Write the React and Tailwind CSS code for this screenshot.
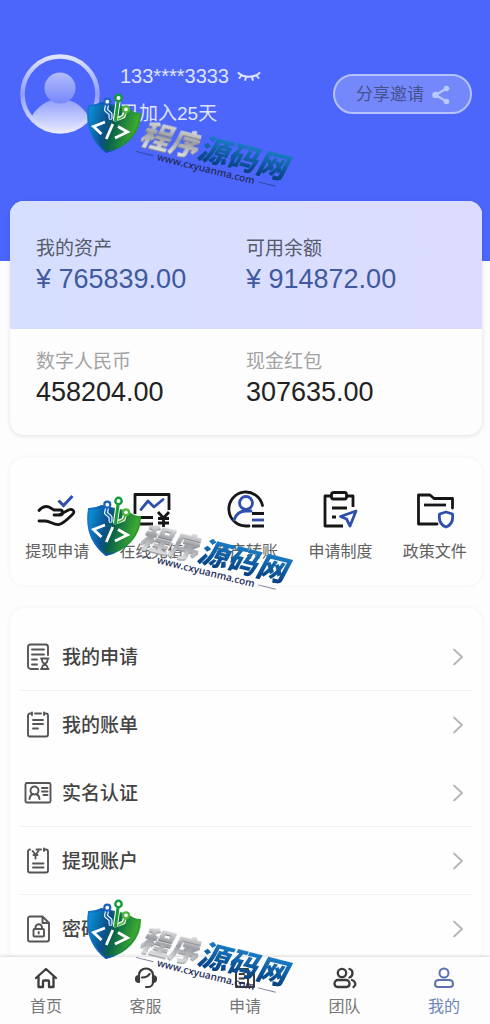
import React from "react";

const wallet = [
  { label: "数字人民币", value: "458204.00" },
  { label: "现金红包", value: "307635.00" },
];

const assets = [
  { label: "我的资产", value: "¥ 765839.00" },
  { label: "可用余额", value: "¥ 914872.00" },
];

const services = [
  { label: "提现申请", Icon: WithdrawIcon },
  { label: "在线充值", Icon: RechargeIcon },
  { label: "资产转账", Icon: TransferIcon },
  { label: "申请制度", Icon: RulesIcon },
  { label: "政策文件", Icon: PolicyIcon },
];

const menu = [
  { label: "我的申请", Icon: ApplyIcon, line: "border-[#f1f1f1]" },
  { label: "我的账单", Icon: BillIcon, line: "border-transparent" },
  { label: "实名认证", Icon: IdCardIcon, line: "border-[#f1f1f1]" },
  { label: "提现账户", Icon: AccountIcon, line: "border-[#f1f1f1]" },
  { label: "密码", Icon: LockFileIcon, line: "border-transparent" },
];

const tabs = [
  { label: "首页", Icon: HomeIcon },
  { label: "客服", Icon: HeadsetIcon },
  { label: "申请", Icon: BookIcon },
  { label: "团队", Icon: TeamIcon },
  { label: "我的", Icon: PersonIcon, active: true },
];

function Stroke({ className, box, width = 2, children }) {
  return (
    <svg
      aria-hidden="true"
      viewBox={box}
      className={className}
      fill="none"
      stroke="currentColor"
      strokeWidth={width}
      strokeLinecap="round"
      strokeLinejoin="round"
    >
      {children}
    </svg>
  );
}

/* Service icons */
function WithdrawIcon() {
  return (
    <Stroke box="0 0 40 40" width={2.8} className="size-10 text-[#161616]">
      <path d="M2 20.5c3-3.500 7-4.600 10-3.500l5 3h6c3.500 0 3.500 5 0 5h-6" />
      <path d="M23 24.500l8.500-4.500c3.500-1.800 7 1.200 4.500 3.800-4 4-9.500 9.700-14 10.700-5 .8-9-3.500-13.500-3.500H2" />
      <path d="M21.500 10.500l5 5 9-9.500" stroke="#2f4fae" strokeWidth="3" strokeLinecap="butt" strokeLinejoin="miter" />
    </Stroke>
  );
}

function RechargeIcon() {
  return (
    <Stroke box="0 0 40 40" width={2.8} className="size-10 text-[#161616]">
      <path d="M3 24V4.500h34V20M2 27.500h19M6 34h15" strokeLinecap="butt" />
      <path d="M9 19.500l7-8.500 6 6 9-7.500" stroke="#2f4fae" />
      <path d="M26 22l5.500 6 5.500-6M31.500 28v9M26 28.500h11M26 33h11" strokeLinecap="butt" />
    </Stroke>
  );
}

function TransferIcon() {
  return (
    <Stroke box="0 0 40 40" width={2.8} className="size-10 text-[#161616]">
      <path d="M23 36H20a17 17 0 1 1 16.500-20.500" />
      <circle cx="20" cy="13" r="6.500" stroke="#2f4fae" />
      <path d="M8 30c2-6 6-9 12-9h5" stroke="#2f4fae" />
      <path d="M26 23.500h12M26 36h12" strokeLinecap="butt" />
      <path d="M26 30h12" stroke="#2f4fae" strokeLinecap="butt" />
    </Stroke>
  );
}

function RulesIcon() {
  return (
    <Stroke box="0 0 40 40" width={2.8} className="size-10 text-[#161616]">
      <path d="M12 6H5v30h18M26 6h7v11" strokeLinecap="butt" />
      <rect x="11.500" y="2.500" width="15" height="6.500" rx="2" />
      <path d="M12 18h15M12 27h4" strokeLinecap="butt" />
      <path d="M36 21l-15.500 5.500 6 2.500 3.500 7z" stroke="#2f4fae" />
    </Stroke>
  );
}

function PolicyIcon() {
  return (
    <Stroke box="0 0 40 40" width={2.8} className="size-10 text-[#161616]">
      <path d="M22 34H3.500V5H15l4 3.500h18.500V18" />
      <path d="M9 15h22" strokeLinecap="butt" />
      <path d="M31 22l6.500 2c.8 6-1 11-6.500 13-5.500-2-7.300-7-6.500-13z" stroke="#2f4fae" />
    </Stroke>
  );
}

/* Menu icons */
const menuIcon = "size-7 shrink-0 text-[#555]";

function ApplyIcon() {
  return (
    <Stroke box="0 0 28 28" width={1.9} className={menuIcon}>
      <path d="M14 26H7a3 3 0 0 1-3-3V4a2.500 2.500 0 0 1 2.500-2.500h15A2.500 2.500 0 0 1 24 4v8M8 6.500h12M8 11.500h12M8 16.500h5M8 21.500h5" />
      <path d="M17 15.500h7.500M17 26h7.500M18 16v1.500c0 3.500 5.500 3.500 5.500 7V26M23.500 16v1.500c0 3.500-5.500 3.500-5.500 7V26" />
    </Stroke>
  );
}

function BillIcon() {
  return (
    <Stroke box="0 0 28 28" width={1.9} className={menuIcon}>
      <path d="M7.500 2.500H6a2 2 0 0 0-2 2v19a2 2 0 0 0 2 2h16a2 2 0 0 0 2-2v-19a2 2 0 0 0-2-2h-1.500M11 2.500h6M8 1.500v2.500M20 1.500v2.500M9 9h10M9 13h10M9 17.500h5" />
    </Stroke>
  );
}

function IdCardIcon() {
  return (
    <Stroke box="0 0 28 28" width={1.9} className={menuIcon}>
      <rect x="1.500" y="4" width="25" height="19.500" rx="1.500" />
      <circle cx="10.500" cy="11.500" r="4" />
      <path d="M5.500 20c.3-3 2-4.500 3.500-5M15.500 20c-.3-3-2-4.500-3.500-5M18 9h5.500M18 12.500h5.500M19.500 16h4" />
    </Stroke>
  );
}

function AccountIcon() {
  return (
    <Stroke box="0 0 28 28" width={1.9} className={menuIcon}>
      <path d="M6 2.500a2 2 0 0 0-2 2v19a2 2 0 0 0 2 2h16a2 2 0 0 0 2-2v-19a2 2 0 0 0-2-2h-1.500M12.500 2.500H17M20 1.500v2.500M9 16.500h10.500M9 20.500h10.500" />
      <path d="M8.500 4l3 3.500 3-3.500M11.500 7.500v4M9.500 8h4" />
    </Stroke>
  );
}

function LockFileIcon() {
  return (
    <Stroke box="0 0 28 28" width={1.9} className={menuIcon}>
      <path d="M18.500 1.500H6a2 2 0 0 0-2 2v21a2 2 0 0 0 2 2h17a2 2 0 0 0 2-2V8zM18.500 2v6H25" />
      <rect x="9.500" y="14" width="10.500" height="7.500" rx="1" />
      <path d="M11.500 14v-1.500a3.200 3.200 0 0 1 6.500 0V14M14.700 17v1.500" />
    </Stroke>
  );
}

/* Tab icons */
const tabIcon = "size-6";

function HomeIcon() {
  return (
    <Stroke box="0 0 24 24" width={2.3} className={tabIcon}>
      <path d="M2 12L12 3l10 9M4.500 10.500V21H9v-5.500a1 1 0 0 1 1-1h4a1 1 0 0 1 1 1V21h4.500V10.500" />
    </Stroke>
  );
}

function HeadsetIcon() {
  return (
    <Stroke box="0 0 24 24" width={2.2} className={tabIcon}>
      <path d="M5 9a7 6.500 0 0 1 14 0" />
      <path d="M5 10a3 3 0 0 0 0 6zM19 10a3 3 0 0 1 0 6z" fill="currentColor" />
      <path d="M19 16c0 3-2 5-4.500 5H12M8 11.500c3.500 0 6-1 7.500-3.500" />
    </Stroke>
  );
}

function BookIcon() {
  return (
    <Stroke box="0 0 24 24" width={2} className={tabIcon}>
      <path d="M3 3h12v18H3zM15 7h6v14h-6M6.500 8H11M6.500 12.500H11M6.500 17H11" />
    </Stroke>
  );
}

function TeamIcon() {
  return (
    <Stroke box="0 0 24 24" width={2.3} className={tabIcon}>
      <circle cx="9" cy="7" r="4.200" />
      <path d="M1.500 17.500A3.500 3.500 0 0 1 5 14h8a3.500 3.500 0 0 1 3.500 3.500c0 2-1 3.500-3 3.500h-9c-2 0-3-1.500-3-3.500zM16.500 3c4 1 4 7 0 8.500M19 14c3.500 1 4.500 5.500 1.500 7" />
    </Stroke>
  );
}

function PersonIcon() {
  return (
    <Stroke box="0 0 24 24" width={2} className={tabIcon}>
      <circle cx="12" cy="7" r="4.500" />
      <path d="M3 18c0-2.500 1.500-4 4-4h10c2.500 0 4 1.500 4 4 0 2-1 3-3 3H6c-2 0-3-1-3-3z" />
    </Stroke>
  );
}

function Avatar() {
  return (
    <svg role="img" aria-label="头像" viewBox="0 0 80 80" className="size-20 shrink-0">
      <defs>
        <linearGradient id="ring" x1="0" y1="0" x2="0" y2="1">
          <stop offset="0" stopColor="#dfe4ff" />
          <stop offset="0.500" stopColor="#8f9eff" />
          <stop offset="1" stopColor="#e6e9ff" />
        </linearGradient>
        <linearGradient id="head" x1="0" y1="0" x2="0" y2="1">
          <stop offset="0" stopColor="#b3bdfb" />
          <stop offset="1" stopColor="#7587fb" />
        </linearGradient>
        <linearGradient id="body" x1="0" y1="0" x2="0" y2="1">
          <stop offset="0" stopColor="#93a1fb" />
          <stop offset="1" stopColor="#eef0ff" />
        </linearGradient>
        <clipPath id="disc">
          <circle cx="40" cy="40" r="38" />
        </clipPath>
      </defs>
      <g clipPath="url(#disc)">
        <path d="M10 66c5-12 15-18 22-20h16c8 2 17 8 22 20L40 82z" fill="url(#body)" />
        <circle cx="40" cy="34" r="15.500" fill="url(#head)" />
      </g>
      <circle cx="40" cy="40" r="37.500" fill="none" stroke="url(#ring)" strokeWidth="4.500" />
    </svg>
  );
}

function ShieldLogo({ id }) {
  return (
    <svg aria-hidden="true" viewBox="0 0 54 62" className="h-[62px] w-[54px]">
      <defs>
        <linearGradient id={id} x1="0" y1="0" x2="1" y2="0.250">
          <stop offset="0" stopColor="#0a9be0" />
          <stop offset="0.420" stopColor="#0b4f8c" />
          <stop offset="0.560" stopColor="#08604a" />
          <stop offset="1" stopColor="#3fae2e" />
        </linearGradient>
        <linearGradient id={id + "-edge"} x1="0" y1="0" x2="1" y2="0">
          <stop offset="0" stopColor="#1478d0" />
          <stop offset="0.400" stopColor="#0b4fa8" />
          <stop offset="0.600" stopColor="#148a3c" />
          <stop offset="1" stopColor="#2f9e2c" />
        </linearGradient>
      </defs>
      <path
        d="M2 13c5 0 9-1 13-3l26 6c4 4 8 5 12 5 0 18-13 33-34 38C4 47-1 31 2 13z"
        fill={"url(#" + id + ")"}
        stroke={"url(#" + id + "-edge)"}
        strokeWidth="2"
      />
      <g fill="none" strokeLinecap="round" strokeLinejoin="round">
        <g stroke="#fff" strokeWidth="4">
          <path d="M20 12l-1 5 4.500 4v4M37.500 20l-1 3.500-5 2" />
        </g>
        <path d="M31 9l-2.500 17" stroke="#fff" strokeWidth="5" />
        <path d="M20 12l-1 5 4.500 4v4.500" stroke="#1565b8" strokeWidth="1.800" />
        <path d="M31 9l-2.500 18" stroke="#189a34" strokeWidth="3" />
        <path d="M38 20l-1.500 3.500-5 2.500" stroke="#4cb53a" strokeWidth="1.800" />
        <circle cx="20.300" cy="8.700" r="3" stroke="#1b62c0" strokeWidth="2.200" fill="#fff" />
        <circle cx="31.500" cy="5" r="3.200" stroke="#129a3c" strokeWidth="2.400" fill="#fff" />
        <circle cx="39" cy="16.300" r="3" stroke="#4cb53a" strokeWidth="2.200" fill="#fff" />
      </g>
      <g fill="none" stroke="#fff" strokeWidth="2.800">
        <path d="M18 29L6.500 33.500l8 7.500M31 33.500l9.500 5.500L28 45M25.800 31l-6.500 15" />
      </g>
    </svg>
  );
}

function Watermark({ id, place }) {
  return (
    <div aria-hidden="true" className={"absolute left-[87px] flex items-start " + place}>
      <ShieldLogo id={id} />
      <div className="mt-[22px] ml-1 flex origin-top-left rotate-[14deg] flex-col font-['Noto_Sans_CJK_SC',sans-serif]">
        <div className="flex text-3xl leading-8 font-black italic">
          <span className="bg-linear-to-b from-[#f0f0f0] via-[#9a9ca1] to-[#e2e2e2] bg-clip-text text-transparent drop-shadow-[0_1px_0_#7d7f85]">
            程序
          </span>
          <span className="bg-linear-to-b from-[#1e86cf] to-[#073f80] bg-clip-text pr-1 text-transparent">源码网</span>
        </div>
        <div className="-mt-[3px] flex items-center gap-1 text-[#222d5c]">
          <span className="h-px w-[18px] bg-current opacity-60" />
          <span className="font-['Open_Sans',sans-serif] text-[10px] leading-4 font-semibold">www.cxyuanma.com</span>
          <span className="h-px w-[18px] bg-current opacity-60" />
        </div>
      </div>
    </div>
  );
}

function Amounts({ items, labelClass, valueClass }) {
  return (
    <dl className="grid grid-cols-2">
      {items.map((item) => (
        <div key={item.label}>
          <dt className={"text-[19px] leading-7 " + labelClass}>{item.label}</dt>
          <dd className={"text-[27px] leading-8 " + valueClass}>{item.value}</dd>
        </div>
      ))}
    </dl>
  );
}

const cardShadow = "shadow-[0_1px_5px_rgba(0,0,0,0.12)]";

export default function App() {
  return (
    <div className="relative flex h-screen flex-col overflow-hidden bg-[#fdfdfd] font-['Liberation_Sans','Noto_Sans_CJK_SC',sans-serif]">
      <main className="min-h-0 flex-1 overflow-y-auto [scrollbar-width:none]">
        <header className="flex items-start bg-[#4c66fc] pt-[54px] pr-[18px] pb-[127px] pl-5">
          <Avatar />
          <div className="ml-5 flex-1 text-[#dfe4ff]">
            <div className="flex items-center gap-2 pt-1.5">
              <span className="text-xl leading-8">133****3333</span>
              <button type="button" aria-label="显示号码" className="text-[#dfe4ff]">
                <Stroke box="0 0 24 12" width={2} className="h-3 w-6">
                  <path d="M1.500 3c5 5 16 5 21 0M4.500 5.500L2.500 8M9 7l-.8 3M15 7l.8 3M19.500 5.500l2 2.500" />
                </Stroke>
              </button>
            </div>
            <p className="pt-1.5 text-[19px] leading-8">已加入25天</p>
          </div>
          <button
            type="button"
            className="mt-5 flex h-10 items-center gap-2 rounded-full border-2 border-[#b4c2ff] bg-[#7488fb] pt-0.5 pr-5 pl-[21px] text-[17px] text-[#46518f]"
          >
            分享邀请
            <svg aria-hidden="true" viewBox="0 0 18 20" className="h-5 w-[18px] text-[#b9c8ff]" fill="currentColor">
              <path d="M14.500 3.500L3.500 10l11 6.500" fill="none" stroke="currentColor" strokeWidth="2.200" />
              <circle cx="14.500" cy="3.500" r="2.800" />
              <circle cx="3.500" cy="10" r="3.200" />
              <circle cx="14.500" cy="16.500" r="2.800" />
            </svg>
          </button>
        </header>

        <div className="-mt-[60px] flex flex-col gap-[23px] pr-2 pl-2.5">
          <section className={"overflow-hidden rounded-[14px] bg-[#fdfdfd] " + cardShadow}>
            <div className="bg-linear-to-r from-[#d6dfff] to-[#dcdcfe] px-[26px] py-[34px]">
              <Amounts items={assets} labelClass="text-[#555a6b]" valueClass="text-[#3f5a9e]" />
            </div>
            <div className="px-[26px] pt-[19px] pb-[27px]">
              <Amounts items={wallet} labelClass="text-[#a3a3a3]" valueClass="text-[#222]" />
            </div>
          </section>

          <nav className="grid grid-cols-5 rounded-[14px] bg-[#fefefe] pt-8 pb-[21px] shadow-[0_0_5px_rgba(0,0,0,0.06)]">
            {services.map(({ label, Icon }) => (
              <a key={label} href="#" className="flex flex-col items-center gap-2.5 text-base leading-6 text-[#606060]">
                <Icon />
                {label}
              </a>
            ))}
          </nav>

          <nav className="rounded-[14px] bg-[#fefefe] px-2.5 pt-[15px] shadow-[0_0_5px_rgba(0,0,0,0.06)]">
            {menu.map(({ label, Icon, line }) => (
              <a
                key={label}
                href="#"
                className={"flex h-[68px] items-center gap-2.5 border-b px-1 text-[19px] font-medium text-[#444] " + line}
              >
                <Icon />
                <span className="flex-1 pt-1">{label}</span>
                <Stroke box="0 0 12 18" width={1.8} className="mr-1 h-[18px] w-3 text-[#b5b5b5]">
                  <path d="M2 1.500L10 9l-8 7.500" />
                </Stroke>
              </a>
            ))}
          </nav>
        </div>
      </main>

      <nav className="flex justify-between bg-[#fdfdfd] px-3.5 pt-[9px] pb-[5px] shadow-[0_-1px_3px_rgba(0,0,0,0.15)]">
        {tabs.map(({ label, Icon, active }) => (
          <a
            key={label}
            href="#"
            className={
              "flex w-16 flex-col items-center gap-[5px] text-base leading-6 " +
              (active ? "text-[#5a72b0]" : "text-[#3c3c3c]")
            }
          >
            <Icon />
            <span className={active ? "text-[#6f86b8]" : "text-[#777]"}>{label}</span>
          </a>
        ))}
      </nav>

      <div className="pointer-events-none">
        <Watermark id="shield-a" place="top-[93px]" />
        <Watermark id="shield-b" place="top-[496px]" />
        <Watermark id="shield-c" place="top-[899px]" />
      </div>
    </div>
  );
}
